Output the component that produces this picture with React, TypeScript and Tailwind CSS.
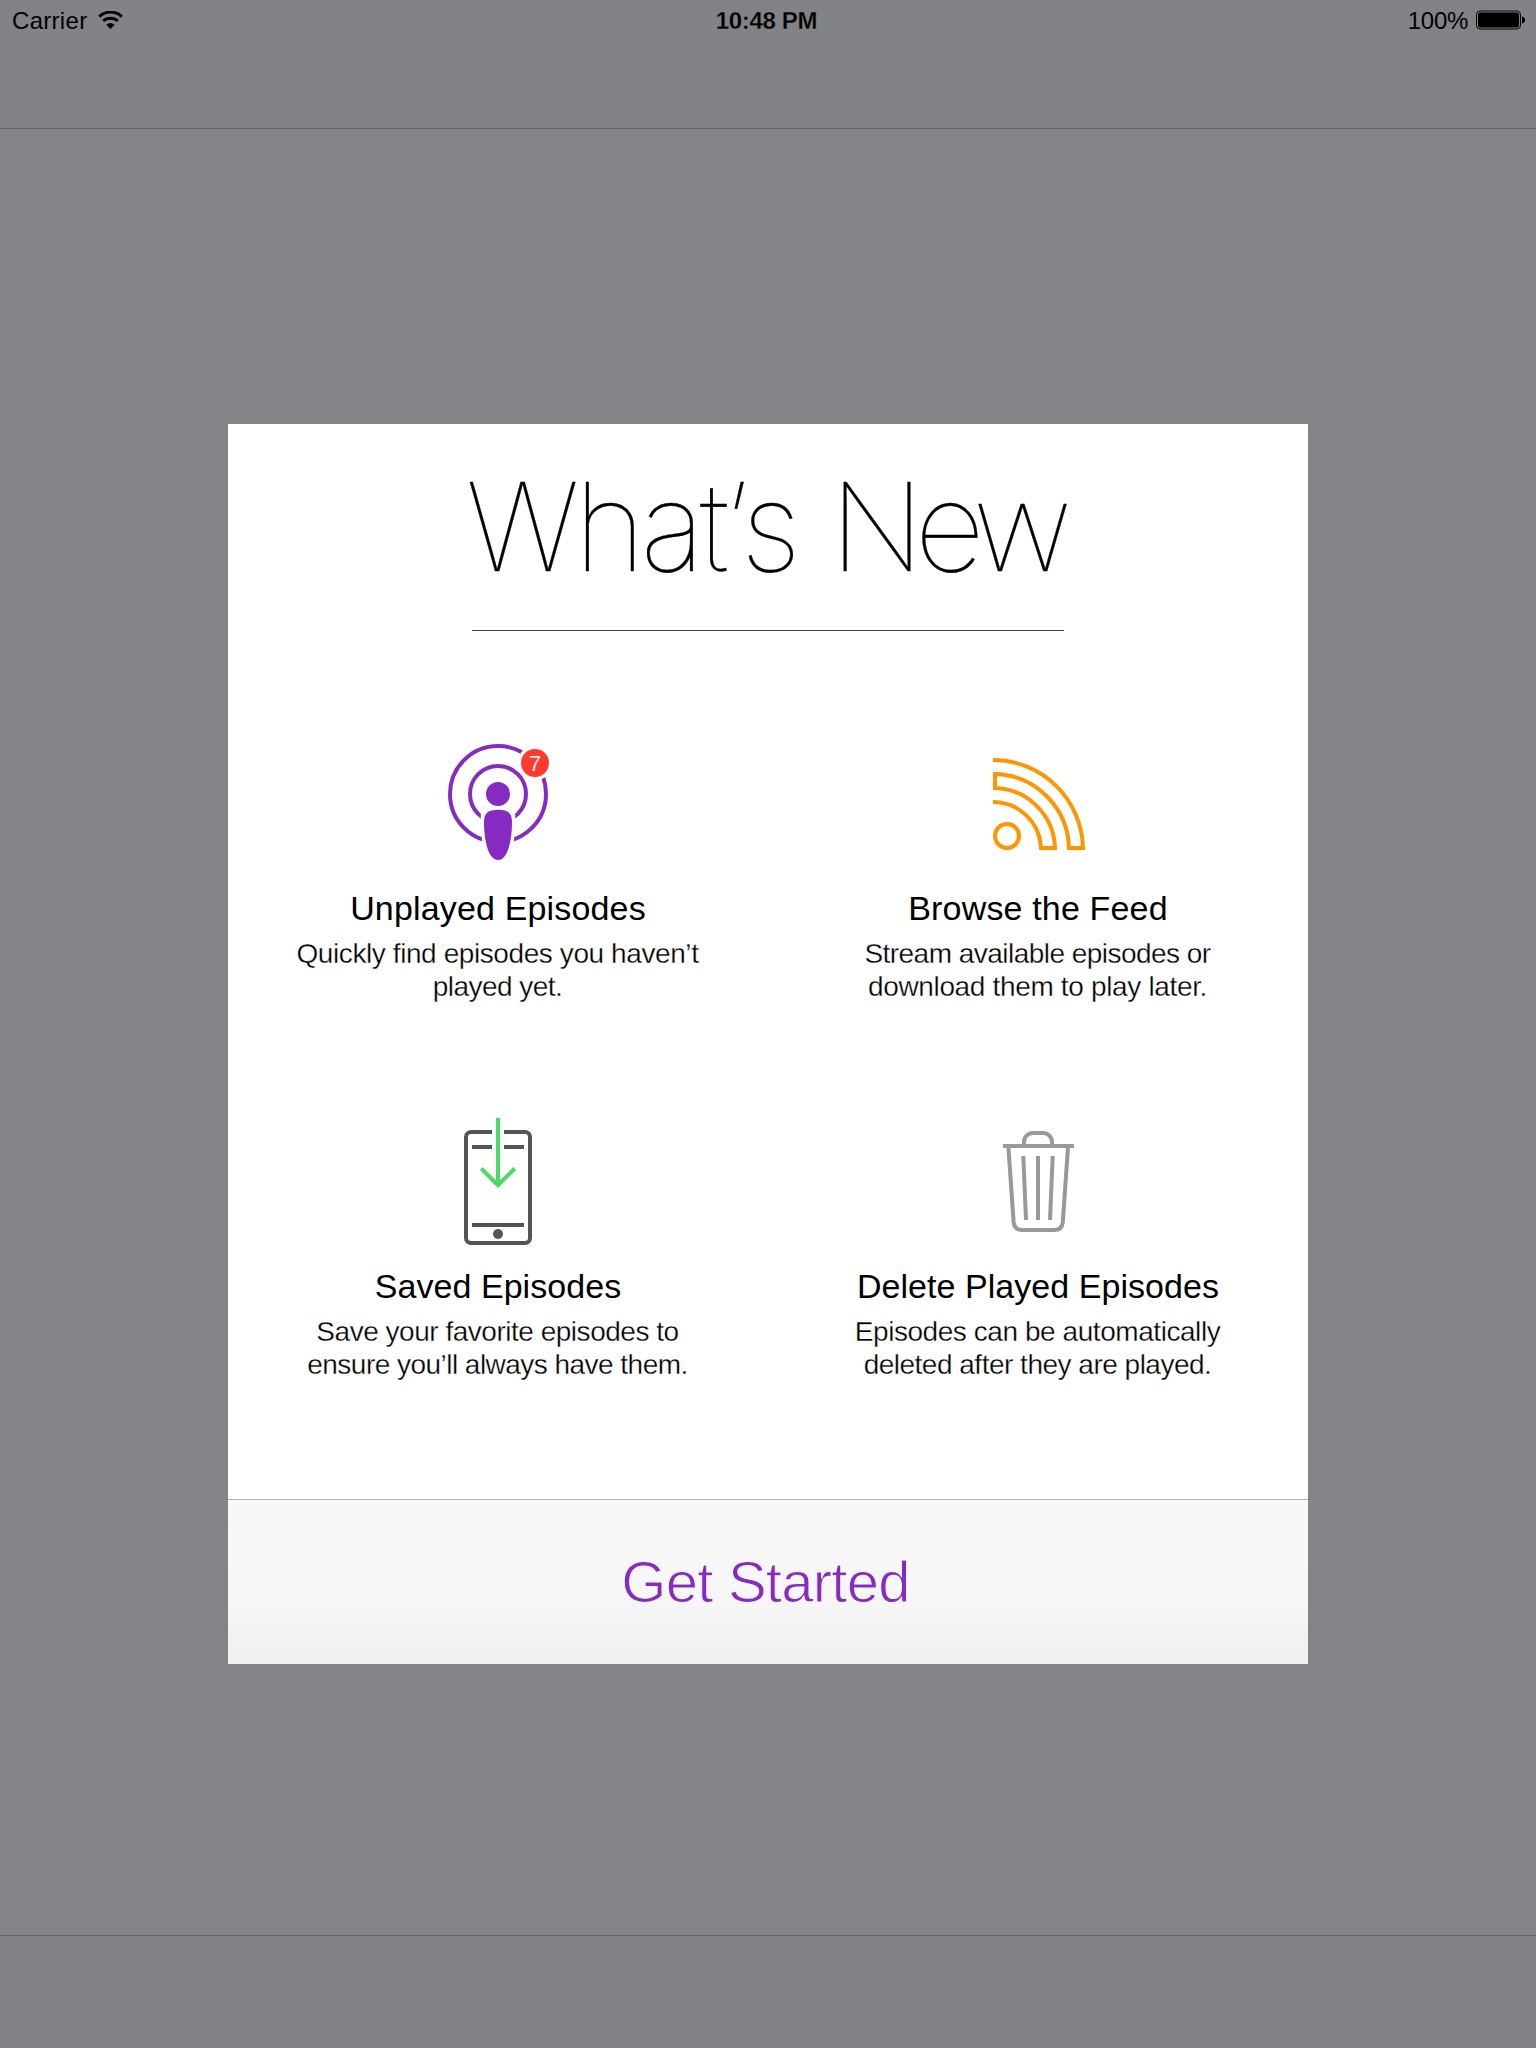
import type { ReactNode } from "react";

function PodcastIcon() {
  return (
    <svg className="h-[120px] w-[108px]" viewBox="444 742 108 120" fill="none">
      <circle cx="498" cy="794" r="48" stroke="#852bc2" strokeWidth="4" />
      <circle cx="498" cy="794" r="28" stroke="#852bc2" strokeWidth="4" />
      <path d="M480.8 806H515.2V817L513.8 846H482.2L480.8 817Z" fill="#fff" />
      <circle cx="498" cy="794" r="12" fill="#852bc2" />
      <path
        d="M484 822C484 813 488 809.8 498 809.8S512 813 512 822C512 838 508.500 860 498 860S484 838 484 822Z"
        fill="#852bc2"
      />
      <circle cx="535" cy="763" r="17.500" fill="#fff" />
      <circle cx="535" cy="763" r="14" fill="#ff3b30" />
      <text x="535" y="771" textAnchor="middle" fill="#fff" fontSize="22.500" fontFamily="Liberation Sans, sans-serif" stroke="#ff3b30" strokeWidth="0.200">
        7
      </text>
    </svg>
  );
}

function FeedIcon() {
  return (
    <svg className="h-[120px] w-[108px]" viewBox="984 742 108 120" fill="none" stroke="#ff9500" strokeWidth="4">
      <path d="M993 760A90 90 0 0 1 1083 848H1069A76 76 0 0 0 995 774V788A62 62 0 0 1 1055 848H1041A48 48 0 0 0 993 802" />
      <circle cx="1007" cy="836" r="12" />
    </svg>
  );
}

function PhoneIcon() {
  return (
    <svg className="h-[130px] w-[108px]" viewBox="444 1117 108 130" fill="none" stroke="#545454" strokeWidth="4">
      <path d="M492 1132H471A5 5 0 0 0 466 1137V1238A5 5 0 0 0 471 1243H525A5 5 0 0 0 530 1238V1137A5 5 0 0 0 525 1132H504" />
      <path d="M472 1147H492M504 1147H524M472 1225H524" />
      <circle cx="498" cy="1234" r="5" fill="#545454" stroke="none" />
      <path d="M498 1118V1185M481.300 1168.500L498 1185.200L514.700 1168.500" stroke="#4cd964" />
    </svg>
  );
}

function TrashIcon() {
  return (
    <svg className="h-[130px] w-[108px]" viewBox="984 1117 108 130" fill="none" stroke="#999" strokeWidth="4">
      <path d="M1003 1146H1074M1024 1146V1142A9 9 0 0 1 1033 1133H1043A9 9 0 0 1 1052 1142V1146" />
      <path d="M1008.400 1147L1013.600 1222Q1014.400 1230 1022 1230H1054.500Q1062 1230 1062.800 1222L1068 1147" />
      <path d="M1023.300 1156L1026 1220M1038 1156V1220M1052.700 1156L1050 1220" />
    </svg>
  );
}

function WifiIcon() {
  return (
    <svg className="h-[18px] w-[25px]" viewBox="0 0 25 18" fill="none" stroke="#000" strokeWidth="3">
      <path d="M1.200 5.600A16.500 16.500 0 0 1 23.800 5.600" />
      <path d="M5.200 10A10.800 10.800 0 0 1 19.800 10" />
      <path d="M8.300 13.700Q12.500 10.400 16.700 13.700L12.500 18Z" fill="#000" stroke="none" />
    </svg>
  );
}

function BatteryIcon() {
  return (
    <svg className="h-5 w-[50px]" viewBox="0 0 50 20" fill="none">
      <rect x="0.500" y="1" width="44" height="18" rx="3.500" stroke="#000" />
      <rect x="2" y="2.500" width="41" height="15" rx="2" fill="#000" />
      <path d="M46 6.500Q49 7 49 10T46 13.500Z" fill="#000" />
    </svg>
  );
}

type FeatureProps = {
  icon: ReactNode;
  title: string;
  titleClass: string;
  lines: [string, string];
  lineClasses: [string, string];
};

function Feature({ icon, title, titleClass, lines, lineClasses }: FeatureProps) {
  return (
    <div className="flex w-[540px] flex-col items-center whitespace-nowrap">
      {icon}
      <h2 className={`text-[34px] leading-[40px] ${titleClass}`}>{title}</h2>
      <p className="mt-[9px] flex flex-col items-center pr-[1px] text-[28px] leading-[33px] [-webkit-text-stroke:0.3px_#fff]">
        <span className={lineClasses[0]}>{lines[0]}</span>
        <span className={lineClasses[1]}>{lines[1]}</span>
      </p>
    </div>
  );
}

export default function App() {
  return (
    <div className="flex h-[2048px] w-[1536px] flex-col bg-[#838487] font-['Liberation_Sans',sans-serif] text-black">
      <header className="h-[129px] border-b border-[#646569] bg-[#828386]">
        <div className="grid h-10 grid-cols-3 items-center pl-3 pr-[10px] text-2xl">
          <div className="flex items-center gap-[11px]">
            <span className="pt-[2px] tracking-[0.3px]">Carrier</span>
            <WifiIcon />
          </div>
          <div className="pr-[5px] pt-[2px] text-center font-bold tracking-[-0.35px] [-webkit-text-stroke:0.3px_#828386]">
            10:48 PM
          </div>
          <div className="flex items-center justify-end gap-2">
            <span className="pt-[2px] tracking-[-0.3px]">100%</span>
            <BatteryIcon />
          </div>
        </div>
      </header>

      <main className="flex flex-1 justify-center pt-[295px]">
        <section className="flex h-[1240px] w-[1080px] flex-col bg-white">
          <div className="flex h-[207px] justify-center pt-[29px]">
            <h1 className="h-[178px] w-[592px] whitespace-nowrap border-b border-[#444] font-['Inter',sans-serif] text-[122px] font-thin leading-[148px] tracking-[-5.200px] [-webkit-text-stroke:0.3px_#000] [word-spacing:5px]">
              <span className="-ml-[6px] tracking-[-5px]">What</span>
              <span>’</span>
              <span className="-ml-[3px]">s </span>
              <span className="tracking-[-9.200px]">New</span>
            </h1>
          </div>

          <div className="flex pt-[111px]">
            <Feature
              icon={<PodcastIcon />}
              title="Unplayed Episodes"
              titleClass="mt-[26px] tracking-[0.16px]"
              lines={["Quickly find episodes you haven’t", "played yet."]}
              lineClasses={["tracking-[-0.41px]", "tracking-[-0.55px]"]}
            />
            <Feature
              icon={<FeedIcon />}
              title="Browse the Feed"
              titleClass="mt-[26px] tracking-[0.16px]"
              lines={["Stream available episodes or", "download them to play later."]}
              lineClasses={["tracking-[-0.53px]", "tracking-[-0.34px]"]}
            />
          </div>

          <div className="flex pt-[114px]">
            <Feature
              icon={<PhoneIcon />}
              title="Saved Episodes"
              titleClass="mt-[19px] tracking-[0.05px]"
              lines={["Save your favorite episodes to", "ensure you’ll always have them."]}
              lineClasses={["tracking-[-0.48px]", "tracking-[-0.53px]"]}
            />
            <Feature
              icon={<TrashIcon />}
              title="Delete Played Episodes"
              titleClass="mt-[19px] tracking-[0.05px]"
              lines={["Episodes can be automatically", "deleted after they are played."]}
              lineClasses={["tracking-[-0.44px]", "tracking-[-0.5px]"]}
            />
          </div>

          <button className="mt-auto h-[165px] border-t border-[#b2b2b2] bg-linear-to-b from-[#f8f8f8] via-[#f7f7f7] via-55% to-[#f0f0f0] pb-[2px] pr-[5px] text-[58px] tracking-[-0.75px] text-[#852bc2] [-webkit-text-stroke:1px_#f7f7f7]">
            Get Started
          </button>
        </section>
      </main>

      <footer className="h-[113px] border-t border-[#646569] bg-[#828386]" />
    </div>
  );
}
